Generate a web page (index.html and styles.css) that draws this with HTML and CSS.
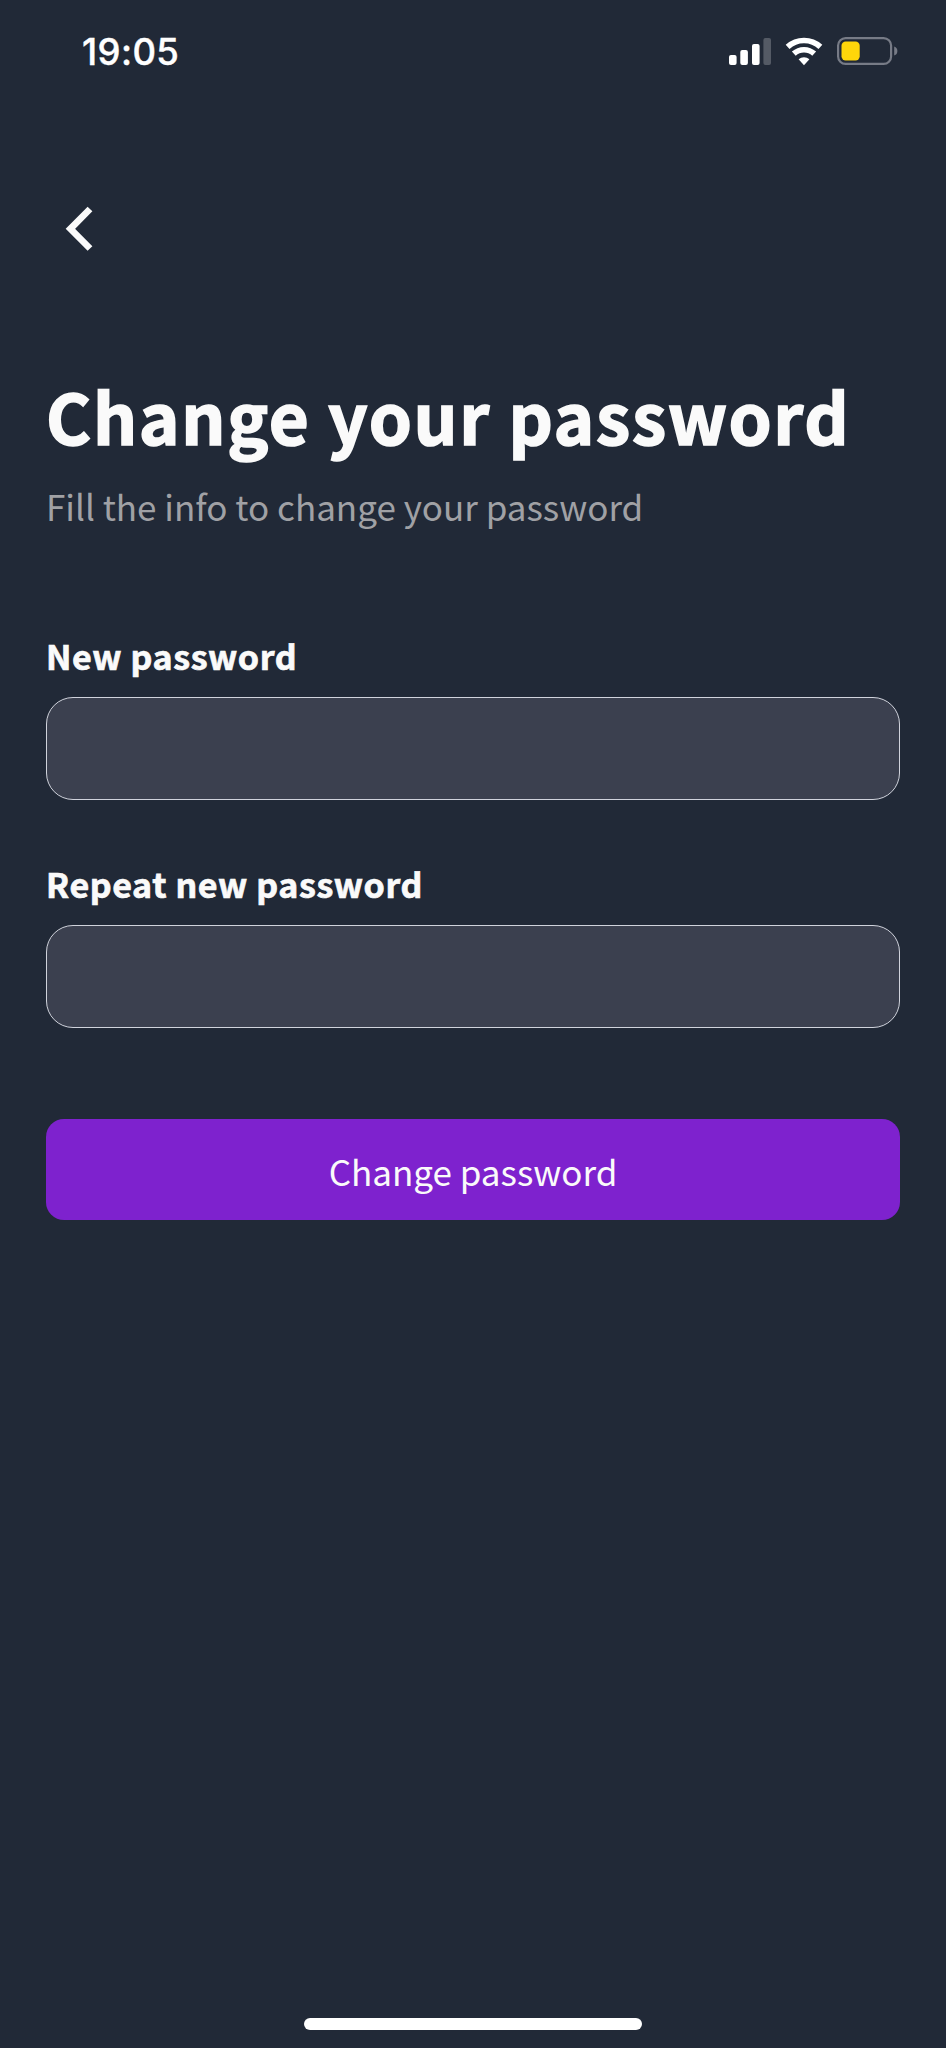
FILE: index.html
```html
<!DOCTYPE html>
<html lang="en">
<head>
<meta charset="utf-8">
<title>Change your password</title>
<link rel="stylesheet" href="styles.css">
</head>
<body>
<div class="screen">
  <header class="status-bar">
    <span class="time">19:05</span>
    <svg class="status-icons" width="170" height="30" viewBox="0 0 170 30">
      <g fill="#fff">
        <rect x="1" y="19" width="7.6" height="10" rx="2"/>
        <rect x="12.3" y="14" width="7.6" height="15" rx="2"/>
        <rect x="24" y="8" width="7.6" height="21" rx="2"/>
        <rect x="35.4" y="2" width="7.6" height="27" rx="2" opacity=".23"/>
      </g>
      <g fill="none" stroke="#fff" stroke-width="5.7">
        <path d="M59.6 10.8a24.5 24.5 0 0 1 32.8 0"/>
        <path d="M65.8 17.7a15.2 15.2 0 0 1 20.4 0"/>
      </g>
      <path d="M76 29.2l-5.4-6a8.3 8.3 0 0 1 10.8 0z" fill="#fff"/>
      <rect x="110.1" y="2.1" width="53" height="25.8" rx="7.5" fill="none" stroke="#777b86" stroke-width="2.2"/>
      <rect x="113.5" y="5.5" width="18.2" height="19" rx="4.2" fill="#ffd60a"/>
      <path d="M166.2 10.5q3.2 1 3.2 4.5t-3.2 4.5z" fill="#777b86"/>
    </svg>
  </header>
  <nav class="nav">
    <a class="back" aria-label="Back">
      <svg width="30" height="48" viewBox="0 0 30 48"><path d="M26 4L6.4 23.8 26 43.5" fill="none" stroke="#fafafa" stroke-width="6.7"/></svg>
    </a>
  </nav>
  <main class="content">
    <h1 class="title">Change your password</h1>
    <p class="subtitle">Fill the info to change your password</p>
    <form class="form">
      <label class="field"><span class="label">New password</span><input class="input" type="password"></label>
      <label class="field"><span class="label">Repeat new password</span><input class="input" type="password"></label>
      <button class="submit" type="button">Change password</button>
    </form>
  </main>
  <div class="home-indicator"></div>
</div>
</body>
</html>
```
FILE: styles.css
```css
* { box-sizing: border-box; }
body {
  margin: 0;
  background: #212937;
  color: #fafafa;
  font-family: "Noto Sans CJK SC", "Noto Sans CJK JP", sans-serif;
}
.screen {
  display: flex;
  flex-direction: column;
  height: 2048px;
  overflow: hidden;
}
.status-bar {
  display: flex;
  justify-content: space-between;
  align-items: center;
  height: 102px;
  padding: 0 48px 0 82px;
}
.time {
  padding-top: 2px;
  font: 500 36.5px/40px Inter, sans-serif;
  letter-spacing: 0.4px;
  color: #fff;
  -webkit-text-stroke: 0.4px #fff;
}
.nav { padding: 103px 0 0 64px; }
.back { display: block; height: 48px; }
.back svg { display: block; }
.content { padding: 122px 46px 0; }
.title {
  margin: 0;
  font-size: 69px;
  line-height: 80px;
  font-weight: 700;
  letter-spacing: 1.7px;
  -webkit-text-stroke: 1.6px #fafafa;
  white-space: nowrap;
}
.subtitle {
  margin: 29px 0 0;
  font-size: 35px;
  line-height: 44px;
  color: #a0a1a5;
}
.form {
  display: flex;
  flex-direction: column;
  margin-top: 104px;
}
.field {
  display: block;
  height: 168px;
  margin-bottom: 60px;
}
.label {
  display: block;
  height: 65px;
  padding-top: 2px;
  font-size: 34px;
  line-height: 44px;
  font-weight: 700;
  letter-spacing: 0.6px;
  -webkit-text-stroke: 0.7px #fafafa;
}
.input {
  display: block;
  width: 100%;
  height: 103px;
  border: 1px solid #d0d3dc;
  border-radius: 27px;
  background: #3b404f;
  color: inherit;
  font: inherit;
  padding: 0 24px;
}
.submit {
  height: 101px;
  margin-top: 31px;
  padding: 2px 0 0;
  border: 0;
  border-radius: 18px;
  background: #7e22ce;
  color: #fafafa;
  font: 400 35px/44px "Noto Sans CJK SC", "Noto Sans CJK JP", sans-serif;
}
.home-indicator {
  width: 338px;
  height: 12px;
  margin: auto auto 18px;
  border-radius: 6px;
  background: #fff;
}
```
